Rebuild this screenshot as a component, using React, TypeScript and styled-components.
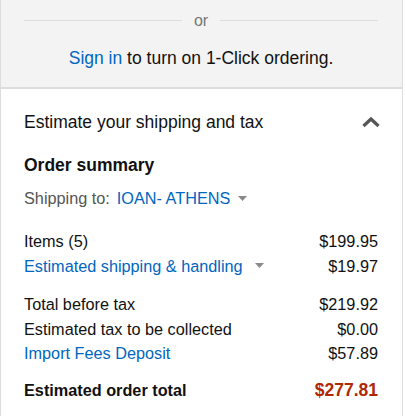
import React from 'react'
import styled, {createGlobalStyle} from 'styled-components'

const GlobalStyle = createGlobalStyle`
  html, body {
    margin: 0;
    padding: 0;
    background: #fff;
  }
  body {
    font-family: "Liberation Sans", Arial, sans-serif;
    font-size: 17.5px;
    color: #111;
  }
`

type Line = {
  label: string
  value: string
  link?: boolean
  caret?: boolean
}

const groups: Line[][] = [
  [
    {label: 'Items (5)', value: '$199.95'},
    {label: 'Estimated shipping & handling', value: '$19.97', link: true, caret: true},
  ],
  [
    {label: 'Total before tax', value: '$219.92'},
    {label: 'Estimated tax to be collected', value: '$0.00'},
    {label: 'Import Fees Deposit', value: '$57.89', link: true},
  ],
]

const Caret = ({gap}: {gap: number}) => (
  <SCaret width="9" height="5" viewBox="0 0 9 5" style={{marginLeft: gap}}>
    <polygon points="0,0 9,0 4.5,5" fill="#8a8a8a" />
  </SCaret>
)

export default function App() {
  return (
    <>
      <GlobalStyle />
      <SPage>
        <STop>
          <SDivider>
            <SRule />
            <SOr>or</SOr>
            <SRule />
          </SDivider>
          <SSignIn>
            <SLink>Sign in</SLink> to turn on 1-Click ordering.
          </SSignIn>
        </STop>
        <SBox>
          <SHeader>
            <span>Estimate your shipping and tax</span>
            <svg width="20" height="12" viewBox="0 0 20 12">
              <polyline
                points="2.5,10 10,3 17.5,10"
                fill="none"
                stroke="#555"
                strokeWidth="3.2"
              />
            </svg>
          </SHeader>
          <STitle>Order summary</STitle>
          <SShipTo>
            Shipping to:<SShipLink>IOAN- ATHENS</SShipLink>
            <Caret gap={8} />
          </SShipTo>
          {groups.map((rows, gi) => (
            <SGroup key={gi}>
              {rows.map((r) => (
                <SRow key={r.label}>
                  <SLabel>
                    {r.link ? <SLink>{r.label}</SLink> : r.label}
                    {r.caret && <Caret gap={12} />}
                  </SLabel>
                  <span>{r.value}</span>
                </SRow>
              ))}
            </SGroup>
          ))}
          <STotal>
            <span>Estimated order total</span>
            <SPrice>$277.81</SPrice>
          </STotal>
        </SBox>
      </SPage>
    </>
  )
}

const SPage = styled.div`
  width: 403px;
`

const STop = styled.div`
  background: #f3f3f3;
  border-left: 1px solid #ddd;
  border-right: 1px solid #ddd;
  border-bottom: 2px solid #dddddd;
  height: 89px;
  box-sizing: border-box;
  padding-top: 8px;
`

const SDivider = styled.div`
  display: flex;
  align-items: center;
  margin: 0 24px 0 23px;
  height: 24px;
`

const SRule = styled.div`
  flex: 1;
  height: 1px;
  background: #ddd;
`

const SOr = styled.span`
  color: #767676;
  font-size: 16px;
  padding: 1px 12px 0;
`

const SSignIn = styled.div`
  text-align: center;
  line-height: 24px;
  margin-top: 14px;
  padding-right: 1px;
`

const SLink = styled.span`
  color: #0066c0;
`

const SShipLink = styled(SLink)`
  margin-left: 7px;
`

const SBox = styled.div`
  border-left: 1px solid #ddd;
  border-right: 1px solid #ddd;
  padding: 21px 24px 14px 23px;
`

const SHeader = styled.div`
  display: flex;
  align-items: center;
  justify-content: space-between;
  line-height: 24px;
  svg {
    margin-right: -3px;
  }
`

const STitle = styled.div`
  font-weight: bold;
  line-height: 24px;
  margin-top: 19px;
`

const SShipTo = styled.div`
  display: flex;
  align-items: center;
  color: #555;
  font-size: 16.25px;
  line-height: 24px;
  margin-top: 9px;
`

const SCaret = styled.svg`
  flex: none;
`

const SGroup = styled.div`
  margin-top: 19px;
  & + & {
    margin-top: 14px;
  }
`

const SRow = styled.div`
  display: flex;
  justify-content: space-between;
  align-items: center;
  font-size: 16.25px;
  line-height: 24.5px;
`

const SLabel = styled.span`
  display: flex;
  align-items: center;
`

const STotal = styled.div`
  display: flex;
  justify-content: space-between;
  align-items: center;
  font-weight: bold;
  font-size: 16.25px;
  line-height: 24px;
  margin-top: 12px;
`

const SPrice = styled.span`
  color: #b12704;
  font-size: 17.5px;
`
